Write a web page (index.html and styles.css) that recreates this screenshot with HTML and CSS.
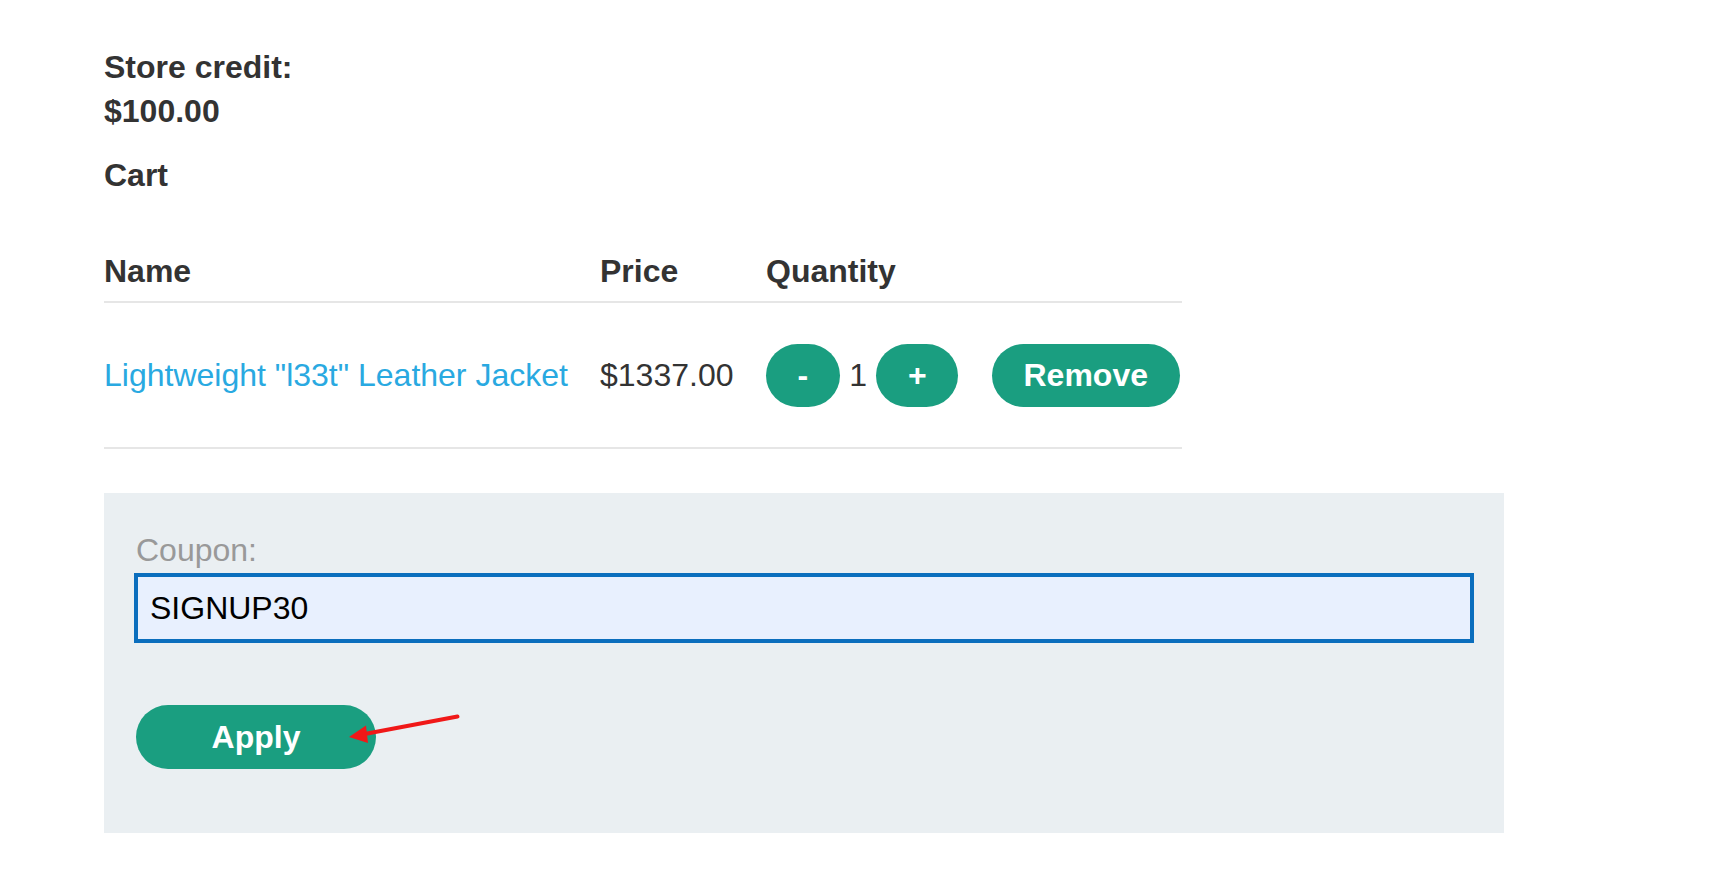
FILE: index.html
```html
<!DOCTYPE html>
<html lang="en">
<head>
<meta charset="utf-8">
<title>Cart</title>
<link rel="stylesheet" href="styles.css">
</head>
<body>
<main class="page">
  <div class="credit">
    <span class="credit-line">Store credit:</span>
    <span class="credit-line">$100.00</span>
  </div>
  <div class="cart-title">Cart</div>

  <div class="cart">
    <div class="cart-head">
      <div>Name</div>
      <div>Price</div>
      <div>Quantity</div>
      <div></div>
    </div>
    <div class="cart-row">
      <div><a class="product-link" href="#">Lightweight "l33t" Leather Jacket</a></div>
      <div class="price">$1337.00</div>
      <div class="qty">
        <button class="btn">-</button>
        <span class="qty-num">1</span>
        <button class="btn">+</button>
      </div>
      <div><button class="btn">Remove</button></div>
    </div>
  </div>

  <form class="coupon-panel">
    <label class="coupon-label" for="coupon">Coupon:</label>
    <input class="coupon-input" id="coupon" type="text" value="SIGNUP30">
    <button class="btn btn-apply" type="button">Apply</button>
  </form>
</main>

<svg class="annotation" width="1712" height="874" viewBox="0 0 1712 874" aria-hidden="true">
  <line x1="457.5" y1="716.5" x2="362" y2="734.5" stroke="#f01818" stroke-width="4" stroke-linecap="round"/>
  <polygon points="349,737 366,725.5 368,743" fill="#f01818"/>
</svg>
</body>
</html>
```

FILE: styles.css
```css
html, body {
  margin: 0;
  padding: 0;
  background: #ffffff;
}

body {
  position: relative;
  font-family: "Liberation Sans", Arial, Helvetica, sans-serif;
  font-size: 32px;
  color: #333333;
}

.page {
  padding: 45px 0 0 104px;
}

.credit {
  font-weight: bold;
  line-height: 44px;
}

.credit-line {
  display: block;
}

.cart-title {
  margin-top: 20px;
  font-weight: bold;
  line-height: 44px;
}

.cart {
  margin-top: 52px;
  width: 1078px;
}

.cart-head,
.cart-row {
  display: grid;
  grid-template-columns: 496px 166px 226px 190px;
}

.cart-head {
  font-weight: bold;
  line-height: 44px;
  padding-bottom: 8px;
  border-bottom: 2px solid #e6e6e6;
}

.cart-row {
  height: 144px;
  align-items: center;
  line-height: 44px;
  border-bottom: 2px solid #e6e6e6;
}

.product-link {
  color: #29a9e1;
  text-decoration: none;
}

.qty {
  display: flex;
  align-items: center;
  gap: 9.5px;
}

.btn {
  display: inline-block;
  height: 63px;
  padding: 0 31.5px;
  border: none;
  border-radius: 32px;
  background: #1a9e80;
  color: #ffffff;
  font-family: "Liberation Sans", Arial, Helvetica, sans-serif;
  font-size: 32px;
  font-weight: bold;
  line-height: 63px;
  cursor: pointer;
}

.coupon-panel {
  box-sizing: border-box;
  width: 1400px;
  margin: 44px 0 0 0;
  padding: 37px 32px 64px;
  background: #eaeff2;
}

.coupon-label {
  display: block;
  line-height: 40px;
  color: #999999;
  margin-bottom: 5px;
}

.coupon-input {
  display: block;
  box-sizing: border-box;
  width: 100%;
  height: 66px;
  padding: 0 12px;
  border: 2px solid #0b6ebd;
  outline: 2px solid #0b6ebd;
  outline-offset: 0;
  background: #e8f0fe;
  color: #000000;
  font-family: "Liberation Sans", Arial, Helvetica, sans-serif;
  font-size: 32px;
}

.btn-apply {
  display: block;
  width: 240px;
  height: 64px;
  margin-top: 64px;
  padding: 0;
  line-height: 64px;
}

.annotation {
  position: absolute;
  left: 0;
  top: 0;
  pointer-events: none;
}
```
